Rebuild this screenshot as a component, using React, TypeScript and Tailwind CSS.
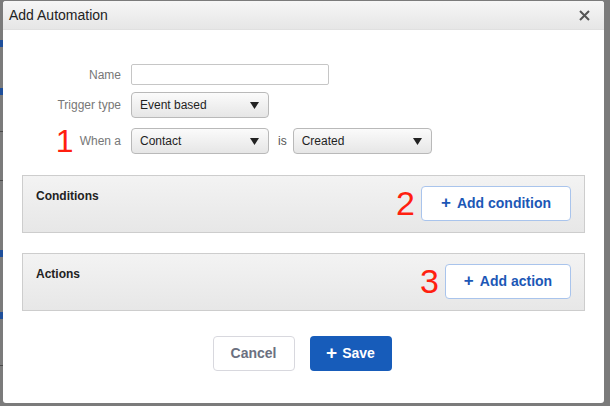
import React from "react";

const font = { fontFamily: '"Liberation Sans", Arial, Helvetica, sans-serif' };

function Select({ value, width }: { value: string; width: string }) {
  return (
    <div
      className={`${width} h-[26px] flex items-center justify-between pl-[8px] pr-[9px] rounded-[4px] border border-[#b9b9b9] bg-gradient-to-b from-[#fbfbfb] to-[#e6e6e6] text-[12px] text-[#1f1f1f]`}
    >
      <span>{value}</span>
      <svg width="9" height="7" viewBox="0 0 9 7">
        <path d="M0 0 L9 0 L4.5 7 Z" fill="#222" />
      </svg>
    </div>
  );
}

function Panel({ title, step, button, btnWidth }: { title: string; step: string; button: string; btnWidth: string }) {
  return (
    <div className="h-[58px] mx-[19px] border border-[#cdcdcd] bg-gradient-to-b from-[#f3f3f3] to-[#e7e7e7] flex justify-between items-start pl-[13px] pr-[13px] pt-[10px]">
      <div className="text-[12px] font-bold text-[#222] pt-[1px]">{title}</div>
      <div className="flex items-center gap-[6px]">
        <span className="text-[34px] leading-[35px] text-[#ff1f10]">{step}</span>
        <button
          className={`${btnWidth} h-[35px] rounded-[4px] border border-[#a9c4ec] bg-white text-[14px] font-bold text-[#1c57b6] flex items-center justify-center gap-[6px]`}
        >
          <span className="text-[17px] leading-none -mt-[2px]">+</span>
          <span>{button}</span>
        </button>
      </div>
    </div>
  );
}

export default function App() {
  return (
    <div className="relative w-[610px] h-[406px] bg-[#7b7b7b] overflow-hidden" style={font}>
      {/* page behind the overlay */}
      <div className="absolute left-0 top-[40px] w-[3px] h-[7px] bg-[#1f4f9a]" />
      <div className="absolute left-0 top-[88px] w-[3px] h-[7px] bg-[#1f4f9a]" />
      <div className="absolute left-0 top-[250px] w-[3px] h-[7px] bg-[#1f4f9a]" />
      <div className="absolute left-0 top-[312px] w-[3px] h-[7px] bg-[#1f4f9a]" />
      <div className="absolute left-0 top-[131px] w-[3px] h-px bg-[#4a4a4a]" />
      <div className="absolute left-0 top-[180px] w-[3px] h-px bg-[#4a4a4a]" />
      <div className="absolute left-0 top-[365px] w-[3px] h-px bg-[#4a4a4a]" />

      <div className="absolute left-[3px] top-[1px] w-[601px] h-[402px] bg-white rounded-[3px] overflow-hidden flex flex-col">
        {/* header */}
        <div className="h-[29px] shrink-0 flex items-center justify-between pl-[6px] pr-[14px] bg-gradient-to-b from-[#f6f6f6] to-[#e6e6e6] border-b border-[#e0e0e0]">
          <span className="text-[14px] text-[#222]">Add Automation</span>
          <svg width="11" height="11" viewBox="0 0 11 11">
            <path d="M1 1 L10 10 M10 1 L1 10" stroke="#555" strokeWidth="2" />
          </svg>
        </div>

        {/* form */}
        <div className="pt-[34px] flex flex-col">
          <div className="flex items-center h-[21px]">
            <div className="w-[118px] text-right text-[12px] text-[#777]">Name</div>
            <input className="ml-[10px] w-[198px] h-[21px] border border-[#c6c6c6] rounded-[2px] bg-white outline-none" />
          </div>
          <div className="flex items-center h-[26px] mt-[7px]">
            <div className="w-[118px] text-right text-[12px] text-[#777]">Trigger type</div>
            <div className="ml-[10px]">
              <Select value="Event based" width="w-[138px]" />
            </div>
          </div>
          <div className="flex items-center h-[26px] mt-[10px]">
            <div className="w-[118px] h-[26px] flex items-center justify-end gap-[6px]">
              <span className="text-[32px] leading-[26px] text-[#ff1f10]">1</span>
              <span className="text-[12px] text-[#777]">When a</span>
            </div>
            <div className="ml-[10px]">
              <Select value="Contact" width="w-[138px]" />
            </div>
            <span className="ml-[9px] mr-[6px] text-[12px] text-[#555]">is</span>
            <Select value="Created" width="w-[139px]" />
          </div>
        </div>

        <div className="mt-[21px]">
          <Panel title="Conditions" step="2" button="Add condition" btnWidth="w-[150px]" />
        </div>
        <div className="mt-[20px]">
          <Panel title="Actions" step="3" button="Add action" btnWidth="w-[126px]" />
        </div>

        {/* footer */}
        <div className="mt-[25px] flex justify-center gap-[15px] pr-[3px]">
          <button className="w-[82px] h-[35px] rounded-[4px] border border-[#d8d8de] bg-white text-[14px] font-bold text-[#6b7080]">
            Cancel
          </button>
          <button className="w-[82px] h-[35px] rounded-[4px] bg-[#175cba] text-[14px] font-bold text-white flex items-center justify-center gap-[5px]">
            <span className="text-[19px] leading-none -mt-[2px]">+</span>
            <span>Save</span>
          </button>
        </div>
      </div>
    </div>
  );
}
